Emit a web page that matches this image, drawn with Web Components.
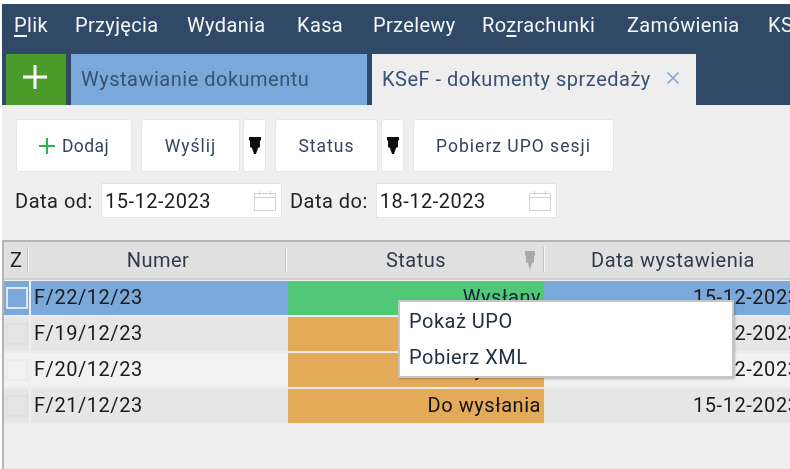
<!DOCTYPE html>
<html lang="pl">
<head>
<meta charset="utf-8">
<title>KSeF</title>
<style>
html, body { margin: 0; height: 100%; background: #fff; overflow: hidden; }
body { font-family: Roboto, "Liberation Sans", sans-serif; color: #1a1a1a; }
</style>
</head>
<body>
<app-shell>
  <app-menubar>
    <menu-item style="width:61px"><u>P</u>lik</menu-item>
    <menu-item style="width:112px">Przyjęcia</menu-item>
    <menu-item style="width:110px">Wydania</menu-item>
    <menu-item style="width:76px">Kasa</menu-item>
    <menu-item style="width:109px">Przelewy</menu-item>
    <menu-item style="width:145px">Ro<u>z</u>rachunki</menu-item>
    <menu-item style="width:141px">Zamówienia</menu-item>
    <menu-item>KSeF</menu-item>
  </app-menubar>
  <app-tabs>
    <tab-add></tab-add>
    <tab-item style="width:296px">Wystawianie dokumentu</tab-item>
    <tab-item active closable style="width:324px">KSeF - dokumenty sprzedaży</tab-item>
  </app-tabs>
  <app-panel>
    <tool-bar>
      <tool-button style="width:116px;letter-spacing:.4px" plus>Dodaj</tool-button>
      <tool-button style="width:99px;margin-left:9px">Wyślij</tool-button>
      <tool-arrow style="margin-left:3px"></tool-arrow>
      <tool-button style="width:103px;margin-left:9px">Status</tool-button>
      <tool-arrow style="margin-left:3px"></tool-arrow>
      <tool-button style="width:201px;margin-left:9px">Pobierz UPO sesji</tool-button>
    </tool-bar>
    <date-row>
      <date-field label="Data od:" value="15-12-2023"></date-field>
      <date-field label="Data do:" value="18-12-2023"></date-field>
    </date-row>
    <data-table>
      <table-head></table-head>
      <table-row selected num="F/22/12/23" status="Wysłany" tone="green" date="15-12-2023"></table-row>
      <table-row shade num="F/19/12/23" status="Do wysłania" tone="orange" date="15-12-2023"></table-row>
      <table-row num="F/20/12/23" status="Do wysłania" tone="orange" date="15-12-2023"></table-row>
      <table-row shade num="F/21/12/23" status="Do wysłania" tone="orange" date="15-12-2023"></table-row>
    </data-table>
    <context-menu>
      <menu-entry>Pokaż UPO</menu-entry>
      <menu-entry>Pobierz XML</menu-entry>
    </context-menu>
  </app-panel>
</app-shell>
<script>
// small helper, every element is just a shadow root with its own style
function define(name, html, init) {
  customElements.define(name, class extends HTMLElement {
    constructor() {
      super();
      const root = this.attachShadow({mode: 'open'});
      root.innerHTML = typeof html === 'function' ? html(this) : html;
      if (init) init(this, root);
    }
  });
}

define('app-shell', `
  <style>:host{display:flex;flex-direction:column;box-sizing:border-box;width:790px;height:469px;padding:4px 0 0 2px;overflow:hidden;filter:blur(.35px)}</style>
  <slot></slot>`);

define('app-menubar', `
  <style>:host{display:flex;align-items:center;height:50px;padding:0 0 8px 12px;box-sizing:border-box;background:#304966;white-space:nowrap;overflow:hidden;flex:none}</style>
  <slot></slot>`);

define('menu-item', `
  <style>
    :host{display:block;flex:none;color:#f4f6f8;font-size:20px;letter-spacing:.35px;line-height:24px}
    ::slotted(u){text-underline-offset:3px}
  </style>
  <slot></slot>`);

define('app-tabs', `
  <style>:host{display:flex;height:51px;padding-left:4px;gap:5px;background:#304966;flex:none}</style>
  <slot></slot>`);

define('tab-add', `
  <style>
    :host{display:flex;align-items:center;justify-content:center;width:60px;background:#4b9b2a;flex:none}
    svg{display:block;margin:-5px 0 0 -2px}
  </style>
  <svg width="24" height="24" viewBox="0 0 24 24"><path d="M12 0v24M0 12h24" stroke="#fff" stroke-width="3" fill="none"/></svg>`);

define('tab-item', el => `
  <style>
    :host{display:flex;align-items:center;box-sizing:border-box;padding:0 11px 0 10px;background:#7aa8da;color:#385273;font-size:20px;letter-spacing:.5px;flex:none;white-space:nowrap}
    :host([active]){background:#eeeeee;padding-right:0}
    svg{margin-left:15px;margin-top:-3px}
    span{display:block;margin-top:-1px}
  </style>
  <span><slot></slot></span>
  ${el.hasAttribute('closable') ? '<svg width="14" height="14" viewBox="0 0 14 14"><path d="M1.5 1.5l11 11M12.5 1.5l-11 11" stroke="#7aa8da" stroke-width="1.6" fill="none"/></svg>' : ''}`);

define('app-panel', `
  <style>:host{display:flex;flex-direction:column;position:relative;flex:1;background:#efefef;min-height:0}</style>
  <slot></slot>`);

define('tool-bar', `
  <style>:host{display:flex;height:53px;margin:14px 0 0 14px;flex:none}</style>
  <slot></slot>`);

define('tool-button', el => `
  <style>
    :host{display:flex;align-items:center;justify-content:center;gap:7px;box-sizing:border-box;background:#fff;border:1px solid #e6e6e6;border-radius:3px;color:#33455e;font-size:17.5px;letter-spacing:1px;flex:none}
    span{display:block;margin-top:1px}
  </style>
  ${el.hasAttribute('plus') ? '<svg width="16" height="16" viewBox="0 0 16 16"><path d="M8 0v16M0 8h16" stroke="#22b84a" stroke-width="2" fill="none"/></svg>' : ''}
  <span><slot></slot></span>`);

define('tool-arrow', `
  <style>
    :host{display:flex;justify-content:center;box-sizing:border-box;width:23px;height:53px;background:#fff;border:1px solid #e6e6e6;border-radius:3px;flex:none;padding-top:17px}
    svg{display:block}
  </style>
  <svg width="12" height="17" viewBox="0 0 12 17"><path d="M0 0h12v3l-1 1v6l-2 1-2 6H5l-2-6-2-1V4L0 3z" fill="#0c0c0c"/></svg>`);

define('date-row', `
  <style>:host{display:flex;gap:8px;height:35px;margin:11px 0 0 13px;flex:none}</style>
  <slot></slot>`);

define('date-field', el => `
  <style>
    :host{display:flex;align-items:center;gap:8px;font-size:20px;letter-spacing:.5px;color:#222}
    .box{display:flex;align-items:center;justify-content:space-between;box-sizing:border-box;width:181px;height:35px;padding:0 4px 0 3px;background:#fff;border:1px solid #e4e4e4;color:#1d1d1d}
    svg{display:block}
  </style>
  <span>${el.getAttribute('label')}</span>
  <div class="box"><span>${el.getAttribute('value')}</span>
    <svg width="24" height="22" viewBox="0 0 24 22" fill="none" stroke="#cfd2d4"><path d="M1.5 3.5h21v17h-21zM1.5 7.5h21" /><path d="M6.5 1v4M17.5 1v4"/></svg>
  </div>`);

define('data-table', `
  <style>:host{display:flex;flex-direction:column;flex:1;margin-top:22px;border-top:2px solid #b4b4b4;border-left:2px solid #b4b4b4;min-height:0}</style>
  <slot></slot>`);

define('table-head', `
  <style>
    :host{display:grid;grid-template-columns:25px 258px 258px 1fr;height:38px;background:#e0e0e0;border-bottom:2px solid #cfcfcf;box-sizing:border-box;font-size:20px;letter-spacing:.5px;color:#2f3c4e;flex:none;padding-top:0}
    div{display:flex;align-items:center;justify-content:center;position:relative;white-space:nowrap}
    div::after{content:"";position:absolute;right:0;top:5px;bottom:6px;width:1px;background:#fbfbfb;border-left:1px solid #c2c2c2}
    div:last-child::after{display:none}
    div:last-child{padding-left:11px}
    .z{justify-content:flex-start;padding-left:6px;color:#222}
    svg{position:absolute;right:9px;top:9px}
  </style>
  <div class="z">Z</div>
  <div>Numer</div>
  <div>Status<svg width="12" height="19" viewBox="0 0 12 19"><path d="M1 0h10v4l-1 1v6l-2 1-2 7-2-7-2-1V5L1 4z" fill="#a9a9a9"/></svg></div>
  <div>Data wystawienia</div>`);

define('table-row', el => `
  <style>
    :host{display:grid;grid-template-columns:25px 258px 258px 1fr;height:36px;box-sizing:border-box;border-bottom:2px solid #ececec;background:#f1f1f1;font-size:20px;letter-spacing:.55px;color:#1c1c1c;flex:none;white-space:nowrap}
    :host([shade]){background:#e6e6e6}
    :host([selected]){background:#7aa8da;margin-top:1px}
    .num,.date{display:flex;align-items:center;padding-bottom:2px}
    .num{padding-left:3px;border-left:2px solid #efefef}
    .chk{display:flex;align-items:center;justify-content:center}
    .chk i{display:block;box-sizing:border-box;width:22px;height:22px;border:2px solid #ebebeb}
    :host([selected]) .chk i{border-color:#dfe6ee}
    :host([shade]) .chk i{border-color:#e0e0e0}
    .status{display:flex;align-items:center;justify-content:flex-end;padding:0 3px 2px 0;margin:0 1px 0 1px;color:#111}
    .green{background:#50c878;color:#123}
    .orange{background:#e3aa5a}
    .date{overflow:hidden;padding-left:148px}
  </style>
  <div class="chk"><i></i></div>
  <div class="num">${el.getAttribute('num')}</div>
  <div class="status ${el.getAttribute('tone')}">${el.getAttribute('status')}</div>
  <div class="date"><span>${el.getAttribute('date')}</span></div>`);

define('context-menu', `
  <style>
    :host{position:absolute;left:396px;top:195px;box-sizing:border-box;width:336px;height:78px;padding:1px 0;background:#fff;border:2px solid #c6c6c6;box-shadow:1px 1px 2px rgba(0,0,0,.25);display:flex;flex-direction:column}
  </style>
  <slot></slot>`);

define('menu-entry', `
  <style>:host{display:flex;align-items:center;height:37px;padding-left:9px;font-size:20px;letter-spacing:.5px;color:#232f44}</style>
  <slot></slot>`);
</script>
</body>
</html>
